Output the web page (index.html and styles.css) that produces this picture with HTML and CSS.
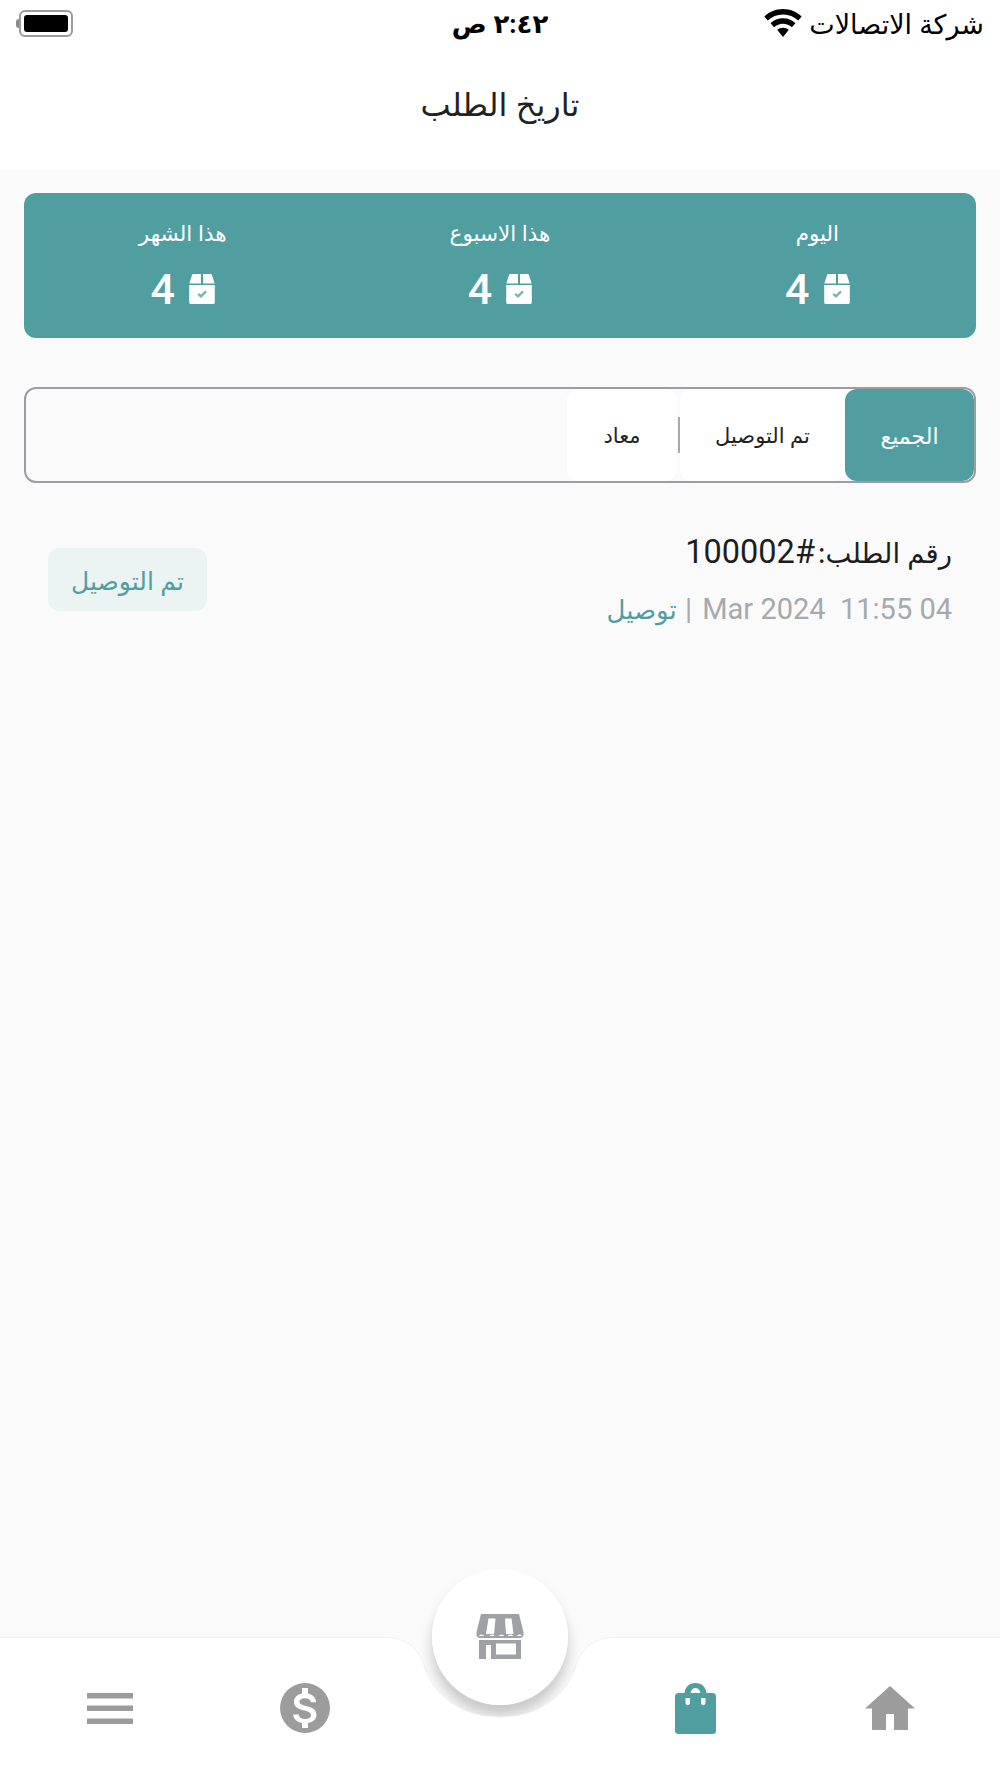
FILE: index.html
```html
<!DOCTYPE html>
<html lang="ar" dir="rtl">
<head>
<meta charset="utf-8">
<title>تاريخ الطلب</title>
<link rel="stylesheet" href="styles.css">
</head>
<body>
<svg class="defs" width="0" height="0" aria-hidden="true">
  <symbol id="box" viewBox="0 0 26 30">
    <path fill-rule="evenodd" d="M4 0H12V9.500H0.400L1.200 6.800 3 1.200Q3.400 0 4 0ZM14 0H22Q22.600 0 23 1.200L24.800 6.800 25.600 9.500H14V0ZM0.200 11H25.800V28.600Q25.800 30 24.400 30H1.600Q0.200 30 0.200 28.600V11Z"/>
    <path class="tick" d="M9.200 19.800L12 22.400 17 17.400"/>
  </symbol>
</svg>
<div class="app">
  <header class="top">
    <div class="status">
      <div class="carrier">
        <span>شركة الاتصالات</span>
        <svg class="wifi" viewBox="0 0 36 27"><path d="M18 0C11 0 5 2.600 0 7.200L3.300 11C7.300 7.300 12.300 5.200 18 5.200S28.700 7.300 32.700 11L36 7.200C31 2.600 25 0 18 0ZM18 9C13.400 9 9.300 10.800 6 13.700L9.400 17.500C11.800 15.400 14.700 14.200 18 14.200S24.200 15.400 26.600 17.500L30 13.700C26.700 10.800 22.600 9 18 9ZM18 18C15.800 18 13.900 18.800 12.400 20.100L18 27 23.600 20.100C22.100 18.800 20.200 18 18 18Z"/></svg>
      </div>
      <div class="clock">٢:٤٢ ص</div>
      <div class="battery-slot"><div class="battery"><div class="level"></div></div><div class="nub"></div></div>
    </div>
    <h1 class="title">تاريخ الطلب</h1>
  </header>

  <main class="content">
    <section class="stats">
      <div class="stat">
        <div class="stat-label">اليوم</div>
        <div class="stat-value"><svg class="box"><use href="#box"/></svg><span>4</span></div>
      </div>
      <div class="stat">
        <div class="stat-label">هذا الاسبوع</div>
        <div class="stat-value"><svg class="box"><use href="#box"/></svg><span>4</span></div>
      </div>
      <div class="stat">
        <div class="stat-label">هذا الشهر</div>
        <div class="stat-value"><svg class="box"><use href="#box"/></svg><span>4</span></div>
      </div>
    </section>

    <nav class="tabs">
      <div class="tab tab-all">الجميع</div>
      <div class="tab tab-done">تم التوصيل</div>
      <div class="sep"></div>
      <div class="tab tab-back">معاد</div>
    </nav>

    <article class="order">
      <div class="order-info">
        <div class="order-no">رقم الطلب: <span class="order-digits">#&rlm;100002</span></div>
        <div class="order-meta">04 Mar 2024  11:55 <span class="order-sep">|</span> <span class="order-type">توصيل</span></div>
      </div>
      <div class="badge">تم التوصيل</div>
    </article>
  </main>

  <footer class="bar">
    <div class="fab-shadow"></div>
    <svg class="bar-shape" viewBox="0 0 1000 140" preserveAspectRatio="none"><path d="M-2 -0.500H385C406 -0.500 417 10 423 24C431 58 462 79 500 79S569 58 577 24C583 10 594 -0.500 615 -0.500H1002V142H-2Z"/></svg>
    <div class="bar-items">
      <svg class="ico ico-home" viewBox="0 0 50 44"><path d="M25 0L50 22.500H43V44H29V28H21V44H7V22.500H0Z"/></svg>
      <svg class="ico ico-bag" viewBox="0 0 41 51"><path fill-rule="evenodd" d="M20.500 0C26.500 0 31 4 31.500 10H37.500Q41 10 41 13.500V47.500Q41 51 37.500 51H3.500Q0 51 0 47.500V13.500Q0 10 3.500 10H9.500C10 4 14.500 0 20.500 0ZM20.500 5C18 5 16 7 15.500 10H25.500C25 7 23 5 20.500 5ZM10.500 15V19.500C10.500 23 15 23 15 19.500V15ZM26 15V19.500C26 23 30.500 23 30.500 19.500V15Z"/></svg>
      <span class="bar-gap"></span>
      <svg class="ico ico-coin" viewBox="0 0 50 50"><path fill-rule="evenodd" d="M25 0A25 25 0 1 1 25 50 25 25 0 0 1 25 0ZM22 5V10.600C17 11.500 14 14.800 14 18.800C14 23.500 17.500 25.800 23.500 27.300C29.500 28.800 31 30 31 32.300C31 34.500 29 36 25 36C21 36 19 34.300 18.700 31.500H13.200C13.500 36 16.800 39 22 40V45H28V40C33.200 39 36.500 36 36.500 32C36.500 26.800 32.800 24.600 27 23.200C21.200 21.800 19.500 20.800 19.500 18.700C19.500 16.700 21.500 15.300 25 15.300C28.500 15.300 30.500 16.800 30.800 19.300H36.200C35.800 15 33 11.700 28 10.600V5Z"/></svg>
      <svg class="ico ico-menu" viewBox="0 0 46 31"><path d="M0 0H46V5.500H0ZM0 12.500H46V18H0ZM0 25.500H46V31H0Z"/></svg>
    </div>
    <div class="fab">
      <svg class="ico-store" viewBox="0 0 50 46">
        <path fill-rule="evenodd" d="M6 0H44L48.500 18V21Q48 24 45 24H5Q2 24 1.500 21V18ZM13.500 4.500L11 20H19L20.500 4.500ZM30 4.500L31 20H38.500L36.500 4.500Z"/>
        <path class="store-notch" d="M4 22a2.500 1.500 0 0 1 5 0ZM14.500 22a2.500 1.500 0 0 1 5 0ZM24 22a2.500 1.500 0 0 1 5 0ZM33 22a2.500 1.500 0 0 1 5 0ZM42 22a2.500 1.500 0 0 1 5 0Z"/>
        <path fill-rule="evenodd" d="M4 26H46V45H16V31H11V45H4ZM21 29.500V40.500H41V29.500Z"/>
      </svg>
    </div>
  </footer>
</div>
</body>
</html>
```

FILE: styles.css
```css
* { box-sizing: border-box; }
html, body { margin: 0; padding: 0; }
body { font-family: "Noto Sans", "DejaVu Sans", sans-serif; background: #fafafa; color: #1d1d1f; }
.defs { position: absolute; }
.app { width: 1000px; height: 1778px; display: flex; flex-direction: column; overflow: hidden; }

.top { height: 169px; background: #fff; flex: none; }
.status { height: 46px; padding: 0 16px 0 16px; display: grid; grid-template-columns: 1fr auto 1fr; align-items: center; color: #000; }
.carrier { display: flex; align-items: center; gap: 7px; font-size: 27px; }
.wifi { width: 38px; height: 28px; fill: #000; }
.clock { font-size: 26px; font-weight: 600; }
.battery-slot { display: flex; align-items: center; justify-content: flex-start; direction: ltr; flex-direction: row-reverse; justify-self: end; }
.battery { width: 54px; height: 27px; border: 2px solid #9c9c9c; border-radius: 6px; padding: 3px; background: #fff; }
.level { width: 100%; height: 100%; background: #000; border-radius: 3px; }
.nub { width: 3px; height: 9px; background: #8a8a8a; border-radius: 3px 0 0 3px; }
.title { margin: 33px 0 0; font-size: 32px; line-height: 50px; font-weight: 400; text-align: center; color: #222; }

.content { flex: 1; padding: 24px 24px 0; }
.stats { height: 145px; background: #519ea1; border-radius: 12px; display: grid; grid-template-columns: repeat(3, 1fr); color: #fff; padding-top: 23px; }
.stat { display: flex; flex-direction: column; align-items: center; gap: 19px; }
.stat-label { font-size: 21.500px; line-height: 34px; }
.stat-value { display: flex; align-items: center; gap: 14px; font-family: Roboto, sans-serif; font-weight: 500; font-size: 43px; line-height: 40px; }
.box { width: 26px; height: 30px; fill: #fff; }
.tick { fill: none; stroke: #7cb4b6; stroke-width: 2.400; }

.tabs { margin-top: 49px; height: 96px; border: 2px solid #9a9ea3; border-radius: 12px; display: flex; align-items: center; overflow: hidden; }
.tab { height: 100%; display: flex; align-items: center; justify-content: center; font-size: 21px; color: #222; background: #fff; border-radius: 12px; }
.tab-all { width: 129px; background: #519ea1; color: #fff; font-size: 22px; }
.tab-done { width: 165px; }
.tab-back { width: 110px; margin-right: 1px; }
.sep { width: 2px; height: 36px; background: #a6a9ad; }

.order { margin-top: 47px; padding: 0 24px 0 24px; display: flex; justify-content: space-between; align-items: center; }
.order-no { font-size: 27.500px; line-height: 44px; color: #1d1d1f; }
.order-digits { font-family: Roboto, sans-serif; font-size: 32.500px; font-weight: 400; margin-right: -4px; }
.order-meta { margin-top: 14px; font-family: Roboto, "Noto Sans", "DejaVu Sans", sans-serif; font-size: 29px; line-height: 40px; color: #a6a9ad; white-space: pre; }
.order-sep { margin-right: 3px; }
.order-type { margin-right: 1px; font-family: "Noto Sans", "DejaVu Sans", sans-serif; font-size: 26px; color: #519ea1; }
.badge { width: 159px; height: 63px; background: #ebf3f3; color: #519ea1; border-radius: 12px; display: flex; align-items: center; justify-content: center; font-size: 25px; }

.bar { height: 140px; flex: none; position: relative; }
.fab-shadow { position: absolute; left: 432px; top: -69px; width: 136px; height: 136px; border-radius: 50%; box-shadow: 0 11px 14px rgba(0, 0, 0, .2); }
.bar-shape { position: absolute; inset: 0; width: 100%; height: 100%; fill: #fff; stroke: #f2f2f2; stroke-width: 1; overflow: visible; }
.bar-items { position: relative; height: 100%; display: grid; grid-template-columns: 220px 170px 220px 170px 220px; align-items: center; justify-items: center; }
.ico { fill: #9c9c9c; display: block; }
.ico-home { width: 50px; height: 44px; }
.ico-bag { width: 41px; height: 51px; fill: #519ea1; }
.ico-coin { width: 50px; height: 50px; }
.ico-menu { width: 46px; height: 31px; }
.fab { position: absolute; left: 432px; top: -69px; width: 136px; height: 136px; border-radius: 50%; background: #fff; display: flex; align-items: center; justify-content: center; }
.ico-store { width: 50px; height: 46px; fill: #9ea2a6; }
.store-notch { fill: #fff; }
```
